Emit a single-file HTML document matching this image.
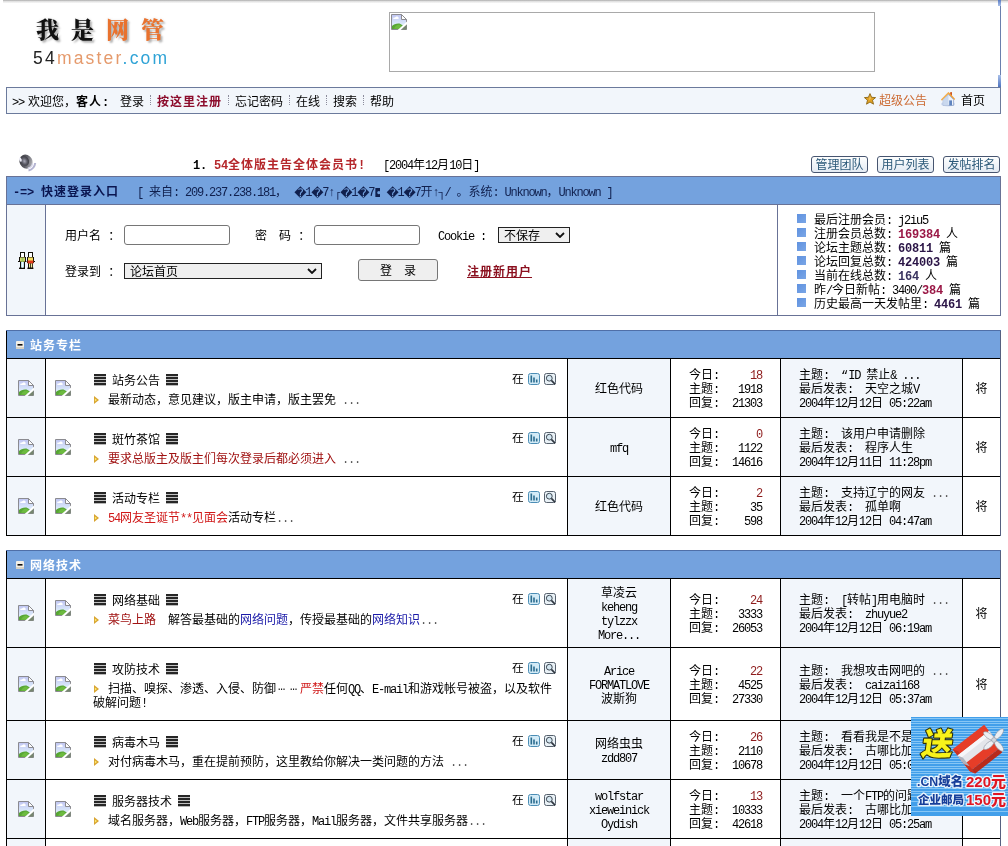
<!DOCTYPE html><html lang="zh-CN"><head><meta charset="utf-8"><title>我是网管 54master.com</title><style>
*{box-sizing:border-box}
html,body{margin:0;padding:0}
#page{position:absolute;left:0;top:0;width:1008px;height:846px;overflow:hidden;will-change:transform}
body{width:1008px;height:846px;overflow:hidden;position:relative;background:#fff;color:#000;font-family:"Liberation Mono","Noto Sans CJK SC",monospace;font-size:12px;line-height:14px}
.l{font-family:"Liberation Mono",monospace;font-size:12px;letter-spacing:-1.2px}
b,.b{font-weight:bold;font-family:"Liberation Mono","Noto Sans CJK SC",monospace;letter-spacing:1px}
b .l,.b .l{letter-spacing:-.2px;font-weight:bold}
.abs{position:absolute}
svg{display:inline-block}
.sep{display:inline-block;width:14px;height:12px;vertical-align:top;position:relative}
.sep:after{content:"";position:absolute;left:7px;top:0;height:11px;border-left:1px dotted #8fa2c2}
table{border-collapse:separate}
.sec{position:absolute;left:6px;width:995px;border-spacing:1px;background:linear-gradient(#4f6fa8,#4f6fa8) top/100% 1px no-repeat,linear-gradient(#566080,#566080) right/1px 100% no-repeat,#000;table-layout:fixed}
.sec td{padding:0;background:#fff;vertical-align:middle}
.sec td.th{height:27px;background:#74a2de;position:relative;color:#fff}
.sec td.th b{position:absolute;left:23px;top:9px}
.sec td.g{background:#f2f6fb}
.sec td.c1{text-align:center}
.sec td.f{vertical-align:top;position:relative}
.sec .bk{vertical-align:middle}
.fi{position:absolute;left:9px}
.ft{position:absolute;left:48px;top:15px;height:12px;white-space:nowrap}
.ft .ham{position:absolute;top:0}
.ft .nm{position:absolute;left:18px;top:1px}
.fr{position:absolute;right:11px;top:14px;height:12px;white-space:nowrap}
.fr .zai{position:absolute;right:33px;top:1px;width:11px;height:11px;overflow:hidden;line-height:12px}
.fr .ic{position:absolute;top:0}
.fd{position:absolute;left:47px;top:35px;right:12px}
.fd .arw{position:relative;top:0px;margin:0 9px 0 1px}
.mod{text-align:center;padding-top:4px!important}
.jg{text-align:center;padding-top:4px!important}
.st{padding-left:18px!important;padding-top:4px!important}
.st div{width:73px;display:flex;justify-content:space-between;white-space:nowrap}
.lp{padding-left:18px!important;padding-top:4px!important;white-space:nowrap}
.red{color:#8e1c1c}
.d{color:#5a5a5a}
.el{display:inline-block;width:12px;text-align:center;letter-spacing:1px;position:relative;top:-3px}
.mq{font-family:"DejaVu Sans",sans-serif;font-size:12px}
.mj{display:inline-block;width:11px;text-align:center;font-family:"DejaVu Sans",sans-serif;font-size:12px;line-height:14px;vertical-align:top}
.mh{display:inline-block;width:6px;text-align:center;overflow:hidden;vertical-align:top;height:14px}
</style></head><body><div id="page">
<svg width="0" height="0" style="position:absolute"><defs><linearGradient id="sky" x1="0" y1="0" x2="0" y2="1"><stop offset="0" stop-color="#c0c5f2"/><stop offset=".6" stop-color="#d9e7fa"/><stop offset="1" stop-color="#eef6fb"/></linearGradient>
<symbol id="bk" viewBox="0 0 16 16"><path d="M.5 .5H10.5L15.5 5.5V15.5H.5Z" fill="url(#sky)" stroke="#8b8b90"/><path d="M10.5 .5V5.5H15.5Z" fill="#fdfdfd" stroke="#8b8b90"/><path d="M2.3 5V3.8L4 3.4L5.2 2.4H6.6L7.6 3.6V5Z" fill="#fff"/><path d="M1 15V12C2.5 10.4 5.5 9.2 8.5 9.6L12 11.5L14 15Z" fill="#57a634"/><path d="M3 14.5C4 12 6 10.6 8.4 10.4L10.5 12L8 15Z" fill="#6dbb40"/><path d="M9.5 15.5L15.5 10V15.5Z" fill="#76866f"/><path d="M6 16.6L16.6 7V9.6L9 16.6Z" fill="#fff"/></symbol></defs></svg>
<div class="abs" style="left:3px;top:0;width:1005px;height:3px;background:linear-gradient(#a6a6a6,#dedede 40%,#f8f8f8)"></div>
<div class="abs" style="left:1000px;top:0;width:1px;height:113px;background:#6a7fae"></div>
<div class="abs" style="left:998px;top:0;width:3px;height:6px;background:linear-gradient(#5a7cc4,#a9c0ea)"></div>
<div class="abs" style="left:998px;top:75px;width:3px;height:12px;background:linear-gradient(#a9c0ea,#4f74c0)"></div>
<div class="abs" id="logo1" style="left:36px;top:16px;font-family:'Liberation Serif','Noto Serif CJK SC',serif;font-weight:900;font-size:23px;line-height:30px;white-space:nowrap;letter-spacing:12px;text-shadow:2px 2px 2px rgba(0,0,0,.28),0 0 3px rgba(0,0,0,.12);color:#111">我是<span style="color:#e9722e">网管</span></div>
<div class="abs" id="logo2" style="left:33px;top:48px;font-family:'Liberation Sans',sans-serif;font-size:17.5px;line-height:20px;letter-spacing:2.2px;white-space:nowrap;color:#222">54<span style="color:#e59a6c">master</span><span style="color:#2fa3d6">.com</span></div>
<div class="abs" style="left:389px;top:12px;width:486px;height:60px;border:1px solid #a9a9a9"><span style="position:absolute;left:1px;top:1px;line-height:0"><svg class="bk" width="16" height="16"><use href="#bk"/></svg></span></div>
<div class="abs" style="left:6px;top:87px;width:995px;height:27px;border:1px solid #6b7a9c;background:#f2f6fb;white-space:nowrap"><span class="abs" style="left:5px;top:8px;"><span class="l">&gt;&gt;</span></span><span class="abs" style="left:21px;top:8px;">欢迎您，</span><span class="abs" style="left:69px;top:8px;"><b>客人<span class="l">:</span></b></span><span class="abs" style="left:113px;top:8px;">登录</span><i class="abs" style="left:143px;top:7px;height:10px;border-left:1px dotted #8c8c9c"></i><span class="abs" style="left:150px;top:8px;"><b style="color:#8c0c2c">按这里注册</b></span><i class="abs" style="left:221px;top:7px;height:10px;border-left:1px dotted #8c8c9c"></i><span class="abs" style="left:228px;top:8px;">忘记密码</span><i class="abs" style="left:282px;top:7px;height:10px;border-left:1px dotted #8c8c9c"></i><span class="abs" style="left:289px;top:8px;">在线</span><i class="abs" style="left:319px;top:7px;height:10px;border-left:1px dotted #8c8c9c"></i><span class="abs" style="left:326px;top:8px;">搜索</span><i class="abs" style="left:356px;top:7px;height:10px;border-left:1px dotted #8c8c9c"></i><span class="abs" style="left:363px;top:8px;">帮助</span><svg width="12" height="12" viewBox="0 0 12 12" style="position:absolute;left:857px;top:5px"><path d="M6 .6L7.6 4.3L11.6 4.6L8.5 7.2L9.5 11.2L6 9L2.5 11.2L3.5 7.2L.4 4.6L4.4 4.3Z" fill="#e2a224" stroke="#8c6616" stroke-width=".9"/><path d="M6 3L6.8 5.2L5 7.5Z" fill="#f6cf70"/></svg><span class="abs" style="left:872px;top:8px;color:#cc6a32;margin-top:-1px">超级公告</span><svg width="16" height="16" viewBox="0 0 16 16" style="position:absolute;left:933px;top:3px"><ellipse cx="8" cy="13" rx="7" ry="2.6" fill="#cfdcf2"/><path d="M1 8.6L8.5 1L10.3 2.8V1.2H12V4.6L15.2 8L14.2 9L8.5 3.4L2 9.6Z" fill="#f2a23c"/><path d="M8.5 1L2 7.8L1 8.6L2 9.6L8.5 3.4Z" fill="#f4b458"/><path d="M10.3 1.2H12V4.6L10.3 2.8Z" fill="#c8542a"/><path d="M3.2 8.6L8.5 3.6L13.6 8.6V14.4H3.2Z" fill="#eef3fa" stroke="#8ea2c6" stroke-width=".8"/><path d="M3.2 8.6L8.5 3.6V14.4H3.2Z" fill="#c9d8ee"/><rect x="9.2" y="9.4" width="2.8" height="5" fill="#5f84bf"/></svg><span class="abs" style="left:954px;top:8px;margin-top:-1px">首页</span></div>
<svg width="19" height="18" viewBox="0 0 19 18" style="position:absolute;left:18px;top:154px"><defs><linearGradient id="spr" x1="0" y1="0" x2="1" y2="1"><stop offset="0" stop-color="#34343a"/><stop offset=".5" stop-color="#5c5c64"/><stop offset="1" stop-color="#d6d6da"/></linearGradient><radialGradient id="spk" cx=".45" cy=".5" r=".55"><stop offset="0" stop-color="#a9a9b8"/><stop offset=".6" stop-color="#5a5a64"/><stop offset="1" stop-color="#3c3c44"/></radialGradient></defs><ellipse cx="8" cy="7.6" rx="6.4" ry="7.2" transform="rotate(-28 8 7.6)" fill="url(#spr)"/><ellipse cx="6.8" cy="7" rx="4" ry="5" transform="rotate(-28 6.8 7)" fill="url(#spk)"/><ellipse cx="2.4" cy="5.6" rx="1.2" ry="2.2" fill="#f1f1fb" transform="rotate(-20 2.4 5.6)"/><path d="M10.5 16.4C14.2 15.6 16.8 12.6 17.2 9" fill="none" stroke="#b4b4d2" stroke-width="2"/><path d="M9.8 14.2C12.2 13.8 14.2 11.8 14.6 9.4" fill="none" stroke="#d7d7ea" stroke-width="1.3"/></svg>
<div class="abs" style="left:193px;top:159px;white-space:nowrap"><b><span class="l">1. </span></b><b style="color:#b5272b"><span class="l">54</span>全体版主告全体会员书<span class="l">!</span></b><span class="l">   [2004</span>年<span class="l">12</span>月<span class="l">10</span>日<span class="l">]</span></div>
<div class="abs btn" style="left:811px;top:156px;width:57px;height:17px;border:1px solid #475570;border-radius:3px;background:linear-gradient(#fdfefe,#e3eaf3);color:#2b5878;text-align:center;line-height:19px;white-space:nowrap">管理团队</div>
<div class="abs btn" style="left:877px;top:156px;width:57px;height:17px;border:1px solid #475570;border-radius:3px;background:linear-gradient(#fdfefe,#e3eaf3);color:#2b5878;text-align:center;line-height:19px;white-space:nowrap">用户列表</div>
<div class="abs btn" style="left:943px;top:156px;width:57px;height:17px;border:1px solid #475570;border-radius:3px;background:linear-gradient(#fdfefe,#e3eaf3);color:#2b5878;text-align:center;line-height:19px;white-space:nowrap">发帖排名</div>
<div class="abs" style="left:6px;top:176px;width:995px;height:140px;border:1px solid #687296;background:#687296"><div class="abs" style="left:0;top:0;width:993px;height:27px;background:#74a2de;white-space:nowrap;color:#0a1550"><div class="abs" style="left:6px;top:9px"><b><span class="l">-=&gt; </span>快速登录入口</b><span style="color:#10204e"><span class="l">   [ </span>来自<span class="l">: 209.237.238.181</span>， <span class="mj">�</span><span class="l">1</span><span class="mj">�</span><span class="l">7</span><span class="mh">↑</span><span class="mh">┌</span><span class="mj">�</span><span class="l">1</span><span class="mj">�</span><span class="l">7</span><span class="mh mq">◘</span><span class="l"> </span><span class="mj">�</span><span class="l">1</span><span class="mj">�</span><span class="l">7</span>开<span class="mh">↑</span><span class="mh">┐</span><span class="l">/ </span>。系统<span class="l">: Unknown</span>，<span class="l">Unknown ]</span></span></div></div><div class="abs" style="left:0;top:28px;width:38px;height:110px;background:#f2f6fb;padding-top:47px"><svg width="17" height="17" viewBox="0 0 17 17" style="display:block;margin:0 auto"><g fill="#141008"><rect x="2" y="0" width="5" height="6"/><rect x="1" y="5" width="7" height="5"/><rect x="0" y="9" width="8" height="1"/><rect x="2" y="10" width="5" height="6"/><rect x="1" y="15.6" width="6" height="1.4"/><rect x="10" y="0" width="5" height="6"/><rect x="9" y="5" width="7" height="6"/><rect x="8.5" y="9" width="8.5" height="1"/><rect x="10" y="11" width="5" height="5"/><rect x="9.4" y="15.6" width="6" height="1.4"/></g><rect x="3" y="1" width="3" height="4" fill="#fff"/><rect x="11" y="1" width="3" height="4" fill="#fff"/><rect x="2" y="5.5" width="5" height="4" fill="#d9d96a"/><rect x="3.5" y="6" width="2" height="4" fill="#9cc85a"/><rect x="3" y="10" width="3" height="5.6" fill="#bfe3ee"/><rect x="4.2" y="10" width=".8" height="5.6" fill="#fff"/><rect x="10" y="5.5" width="5" height="3.5" fill="#f4dc60"/><rect x="9.6" y="8.5" width="5.8" height="3" fill="#e23a1c"/><rect x="11" y="11.5" width="1.2" height="4" fill="#f4e89a"/><rect x="13" y="11.5" width="1.2" height="4" fill="#f4e89a"/></svg></div><div class="abs" style="left:39px;top:28px;width:731px;height:110px;background:#fff"></div><div class="abs" style="left:771px;top:28px;width:222px;height:110px;background:#fff;padding:9px 0 0 36px;white-space:nowrap"><div style="position:relative;height:14px"><i style="position:absolute;left:-17px;top:0px;width:9px;height:9px;background:linear-gradient(135deg,#5f92e0,#7aa6e6)"></i>最后注册会员<span class="l">: </span><span class="l">j2iu5</span></div><div style="position:relative;height:14px"><i style="position:absolute;left:-17px;top:0px;width:9px;height:9px;background:linear-gradient(135deg,#5f92e0,#7aa6e6)"></i>注册会员总数<span class="l">: </span><b style="color:#9a1846"><span class="l">169384</span></b><span class="l"> </span>人</div><div style="position:relative;height:14px"><i style="position:absolute;left:-17px;top:0px;width:9px;height:9px;background:linear-gradient(135deg,#5f92e0,#7aa6e6)"></i>论坛主题总数<span class="l">: </span><b style="color:#2a1446"><span class="l">60811</span></b><span class="l"> </span>篇</div><div style="position:relative;height:14px"><i style="position:absolute;left:-17px;top:0px;width:9px;height:9px;background:linear-gradient(135deg,#5f92e0,#7aa6e6)"></i>论坛回复总数<span class="l">: </span><b style="color:#2a1446"><span class="l">424003</span></b><span class="l"> </span>篇</div><div style="position:relative;height:14px"><i style="position:absolute;left:-17px;top:0px;width:9px;height:9px;background:linear-gradient(135deg,#5f92e0,#7aa6e6)"></i>当前在线总数<span class="l">: </span><b style="color:#3a3460"><span class="l">164</span></b><span class="l"> </span>人</div><div style="position:relative;height:14px"><i style="position:absolute;left:-17px;top:0px;width:9px;height:9px;background:linear-gradient(135deg,#5f92e0,#7aa6e6)"></i>昨<span class="l">/</span>今日新帖<span class="l">: </span><span class="l">3400/</span><b style="color:#9a1846"><span class="l">384</span></b><span class="l"> </span>篇</div><div style="position:relative;height:14px"><i style="position:absolute;left:-17px;top:0px;width:9px;height:9px;background:linear-gradient(135deg,#5f92e0,#7aa6e6)"></i>历史最高一天发帖里<span class="l">: </span><b style="color:#2a1446"><span class="l">4461</span></b><span class="l"> </span>篇</div></div></div>
<div class="abs" style="left:65px;top:230px;white-space:nowrap">用户名 ：</div>
<div class="abs" style="left:124px;top:225px;width:106px;height:20px;border:1px solid #767676;border-radius:3px;background:#fff"></div>
<div class="abs" style="left:255px;top:230px;white-space:nowrap">密<span class="l">  </span>码 ：</div>
<div class="abs" style="left:314px;top:225px;width:106px;height:20px;border:1px solid #767676;border-radius:3px;background:#fff"></div>
<div class="abs" style="left:438px;top:230px;white-space:nowrap"><span class="l">Cookie : </span></div>
<div class="abs" style="left:498px;top:227px;width:72px;height:16px;border:1px solid #222;background:#efefef;padding-left:5px;line-height:18px;white-space:nowrap">不保存<svg width="10" height="6" viewBox="0 0 10 6" style="position:absolute;right:4px;top:4px"><path d="M1 1L5 5L9 1" fill="none" stroke="#111" stroke-width="1.8"/></svg></div>
<div class="abs" style="left:65px;top:266px;white-space:nowrap">登录到 ：</div>
<div class="abs" style="left:124px;top:263px;width:198px;height:16px;border:1px solid #222;background:#efefef;padding-left:5px;line-height:18px;white-space:nowrap">论坛首页<svg width="10" height="6" viewBox="0 0 10 6" style="position:absolute;right:4px;top:4px"><path d="M1 1L5 5L9 1" fill="none" stroke="#111" stroke-width="1.8"/></svg></div>
<div class="abs" style="left:358px;top:259px;width:80px;height:22px;border:1px solid #767676;border-radius:3px;background:#efefef;text-align:center;line-height:24px;white-space:nowrap">登<span class="l">  </span>录</div>
<div class="abs" style="left:467px;top:266px;white-space:nowrap"><b style="color:#8b0f1e;text-decoration:underline">注册新用户</b></div>
<table class="sec" style="top:330px" cellspacing="1"><colgroup><col style="width:38px"><col style="width:521px"><col style="width:102px"><col style="width:109px"><col style="width:181px"><col style="width:37px"></colgroup><tr><td class="th" colspan="6"><svg width="8" height="8" viewBox="0 0 8 8" style="position:absolute;left:9px;top:10px"><rect width="8" height="8" rx="1" fill="#f3efe6"/><rect x="0" y="6" width="8" height="2" fill="#d8d2c4"/><rect x="1.5" y="3" width="5" height="1.6" fill="#111"/></svg><b>站务专栏</b></td></tr><tr style="height:58px"><td class="g c1"><svg class="bk" width="16" height="16"><use href="#bk"/></svg></td><td class="f"><span class="fi" style="top:21px"><svg class="bk" width="16" height="16"><use href="#bk"/></svg></span><div class="ft"><svg class="ham" width="12" height="12" viewBox="0 0 12 12"><g fill="#262626"><rect y="0" width="12" height="2"/><rect y="3" width="12" height="2"/><rect y="6" width="12" height="2"/><rect y="9" width="12" height="2"/></g><g fill="#9a9a9a"><rect y="2" width="12" height=".6"/><rect y="5" width="12" height=".6"/><rect y="8" width="12" height=".6"/><rect y="11" width="12" height=".7"/></g></svg><span class="nm">站务公告</span><span style="position:absolute;left:72px;top:0"><svg class="ham" width="12" height="12" viewBox="0 0 12 12"><g fill="#262626"><rect y="0" width="12" height="2"/><rect y="3" width="12" height="2"/><rect y="6" width="12" height="2"/><rect y="9" width="12" height="2"/></g><g fill="#9a9a9a"><rect y="2" width="12" height=".6"/><rect y="5" width="12" height=".6"/><rect y="8" width="12" height=".6"/><rect y="11" width="12" height=".7"/></g></svg></span></div><div class="fr"><span class="zai">在</span><span style="position:absolute;right:16px;top:0;width:12px;height:12px"><svg class="ic" width="12" height="12" viewBox="0 0 12 12"><rect x=".5" y=".5" width="11" height="11" rx="2" fill="#d3ebf7" stroke="#4b8db5"/><rect x="2.5" y="2.5" width="1.6" height="7" fill="#2c6d8f"/><rect x="5.2" y="4.5" width="1.6" height="5" fill="#2c6d8f"/><rect x="7.9" y="6.5" width="1.6" height="3" fill="#2c6d8f"/></svg></span><span style="position:absolute;right:0;top:0;width:12px;height:12px"><svg class="ic" width="12" height="12" viewBox="0 0 12 12"><rect x=".5" y=".5" width="11" height="11" rx="2" fill="#e9f1f6" stroke="#56606c"/><circle cx="5.3" cy="5.2" r="2.9" fill="#d6e8f2" stroke="#3f4a55" stroke-width="1"/><path d="M7.4 7.4L11.2 11.4" stroke="#2e3640" stroke-width="1.6"/></svg></span></div><div class="fd"><svg class="arw" width="5" height="8" viewBox="0 0 5 8"><path d="M0 0L5 4L0 8Z" fill="#d8a330"/><path d="M.9 2.4L3 4L.9 5.6Z" fill="#fbea72"/></svg>最新动态，意见建议，版主申请，版主罢免<span class="l d"> ...</span></div></td><td class="g mod">红色代码</td><td class="st"><div><span>今日:</span><span class="red"><span class="l">18</span></span></div><div><span>主题:</span><span><span class="l">1918</span></span></div><div><span>回复:</span><span><span class="l">21303</span></span></div></td><td class="g lp">主题<span class="l">:</span><span class="l">&nbsp;&nbsp;</span>“<span class="l">ID </span>禁止<span class="l">&amp; ...</span><br>最后发表<span class="l">:&nbsp;&nbsp;</span>天空之城<span class="l">V</span><br><span class="l">2004</span>年<span class="l">12</span>月<span class="l">12</span>日<span class="l"> 05:22am</span></td><td class="jg">将</td></tr><tr style="height:58px"><td class="g c1"><svg class="bk" width="16" height="16"><use href="#bk"/></svg></td><td class="f"><span class="fi" style="top:21px"><svg class="bk" width="16" height="16"><use href="#bk"/></svg></span><div class="ft"><svg class="ham" width="12" height="12" viewBox="0 0 12 12"><g fill="#262626"><rect y="0" width="12" height="2"/><rect y="3" width="12" height="2"/><rect y="6" width="12" height="2"/><rect y="9" width="12" height="2"/></g><g fill="#9a9a9a"><rect y="2" width="12" height=".6"/><rect y="5" width="12" height=".6"/><rect y="8" width="12" height=".6"/><rect y="11" width="12" height=".7"/></g></svg><span class="nm">斑竹茶馆</span><span style="position:absolute;left:72px;top:0"><svg class="ham" width="12" height="12" viewBox="0 0 12 12"><g fill="#262626"><rect y="0" width="12" height="2"/><rect y="3" width="12" height="2"/><rect y="6" width="12" height="2"/><rect y="9" width="12" height="2"/></g><g fill="#9a9a9a"><rect y="2" width="12" height=".6"/><rect y="5" width="12" height=".6"/><rect y="8" width="12" height=".6"/><rect y="11" width="12" height=".7"/></g></svg></span></div><div class="fr"><span class="zai">在</span><span style="position:absolute;right:16px;top:0;width:12px;height:12px"><svg class="ic" width="12" height="12" viewBox="0 0 12 12"><rect x=".5" y=".5" width="11" height="11" rx="2" fill="#d3ebf7" stroke="#4b8db5"/><rect x="2.5" y="2.5" width="1.6" height="7" fill="#2c6d8f"/><rect x="5.2" y="4.5" width="1.6" height="5" fill="#2c6d8f"/><rect x="7.9" y="6.5" width="1.6" height="3" fill="#2c6d8f"/></svg></span><span style="position:absolute;right:0;top:0;width:12px;height:12px"><svg class="ic" width="12" height="12" viewBox="0 0 12 12"><rect x=".5" y=".5" width="11" height="11" rx="2" fill="#e9f1f6" stroke="#56606c"/><circle cx="5.3" cy="5.2" r="2.9" fill="#d6e8f2" stroke="#3f4a55" stroke-width="1"/><path d="M7.4 7.4L11.2 11.4" stroke="#2e3640" stroke-width="1.6"/></svg></span></div><div class="fd"><svg class="arw" width="5" height="8" viewBox="0 0 5 8"><path d="M0 0L5 4L0 8Z" fill="#d8a330"/><path d="M.9 2.4L3 4L.9 5.6Z" fill="#fbea72"/></svg><span style="color:#a01212">要求总版主及版主们每次登录后都必须进入</span><span class="l d"> ...</span></div></td><td class="g mod"><span class="l">mfq</span></td><td class="st"><div><span>今日:</span><span class="red"><span class="l">0</span></span></div><div><span>主题:</span><span><span class="l">1122</span></span></div><div><span>回复:</span><span><span class="l">14616</span></span></div></td><td class="g lp">主题<span class="l">:</span><span class="l">&nbsp;&nbsp;</span>该用户申请删除<br>最后发表<span class="l">:&nbsp;&nbsp;</span>程序人生<br><span class="l">2004</span>年<span class="l">12</span>月<span class="l">11</span>日<span class="l"> 11:28pm</span></td><td class="jg">将</td></tr><tr style="height:58px"><td class="g c1"><svg class="bk" width="16" height="16"><use href="#bk"/></svg></td><td class="f"><span class="fi" style="top:21px"><svg class="bk" width="16" height="16"><use href="#bk"/></svg></span><div class="ft"><svg class="ham" width="12" height="12" viewBox="0 0 12 12"><g fill="#262626"><rect y="0" width="12" height="2"/><rect y="3" width="12" height="2"/><rect y="6" width="12" height="2"/><rect y="9" width="12" height="2"/></g><g fill="#9a9a9a"><rect y="2" width="12" height=".6"/><rect y="5" width="12" height=".6"/><rect y="8" width="12" height=".6"/><rect y="11" width="12" height=".7"/></g></svg><span class="nm">活动专栏</span><span style="position:absolute;left:72px;top:0"><svg class="ham" width="12" height="12" viewBox="0 0 12 12"><g fill="#262626"><rect y="0" width="12" height="2"/><rect y="3" width="12" height="2"/><rect y="6" width="12" height="2"/><rect y="9" width="12" height="2"/></g><g fill="#9a9a9a"><rect y="2" width="12" height=".6"/><rect y="5" width="12" height=".6"/><rect y="8" width="12" height=".6"/><rect y="11" width="12" height=".7"/></g></svg></span></div><div class="fr"><span class="zai">在</span><span style="position:absolute;right:16px;top:0;width:12px;height:12px"><svg class="ic" width="12" height="12" viewBox="0 0 12 12"><rect x=".5" y=".5" width="11" height="11" rx="2" fill="#d3ebf7" stroke="#4b8db5"/><rect x="2.5" y="2.5" width="1.6" height="7" fill="#2c6d8f"/><rect x="5.2" y="4.5" width="1.6" height="5" fill="#2c6d8f"/><rect x="7.9" y="6.5" width="1.6" height="3" fill="#2c6d8f"/></svg></span><span style="position:absolute;right:0;top:0;width:12px;height:12px"><svg class="ic" width="12" height="12" viewBox="0 0 12 12"><rect x=".5" y=".5" width="11" height="11" rx="2" fill="#e9f1f6" stroke="#56606c"/><circle cx="5.3" cy="5.2" r="2.9" fill="#d6e8f2" stroke="#3f4a55" stroke-width="1"/><path d="M7.4 7.4L11.2 11.4" stroke="#2e3640" stroke-width="1.6"/></svg></span></div><div class="fd"><svg class="arw" width="5" height="8" viewBox="0 0 5 8"><path d="M0 0L5 4L0 8Z" fill="#d8a330"/><path d="M.9 2.4L3 4L.9 5.6Z" fill="#fbea72"/></svg><span style="color:#d01818"><span class="l">54</span>网友圣诞节<span class="l">**</span>见面会</span>活动专栏<span class="l d">...</span></div></td><td class="g mod">红色代码</td><td class="st"><div><span>今日:</span><span class="red"><span class="l">2</span></span></div><div><span>主题:</span><span><span class="l">35</span></span></div><div><span>回复:</span><span><span class="l">598</span></span></div></td><td class="g lp">主题<span class="l">:</span><span class="l">&nbsp;&nbsp;</span>支持辽宁的网友<span class="l d"> ...</span><br>最后发表<span class="l">:&nbsp;&nbsp;</span>孤单啊<br><span class="l">2004</span>年<span class="l">12</span>月<span class="l">12</span>日<span class="l"> 04:47am</span></td><td class="jg">将</td></tr></table>
<table class="sec" style="top:550px" cellspacing="1"><colgroup><col style="width:38px"><col style="width:521px"><col style="width:102px"><col style="width:109px"><col style="width:181px"><col style="width:37px"></colgroup><tr><td class="th" colspan="6"><svg width="8" height="8" viewBox="0 0 8 8" style="position:absolute;left:9px;top:10px"><rect width="8" height="8" rx="1" fill="#f3efe6"/><rect x="0" y="6" width="8" height="2" fill="#d8d2c4"/><rect x="1.5" y="3" width="5" height="1.6" fill="#111"/></svg><b>网络技术</b></td></tr><tr style="height:68px"><td class="g c1"><svg class="bk" width="16" height="16"><use href="#bk"/></svg></td><td class="f"><span class="fi" style="top:21px"><svg class="bk" width="16" height="16"><use href="#bk"/></svg></span><div class="ft"><svg class="ham" width="12" height="12" viewBox="0 0 12 12"><g fill="#262626"><rect y="0" width="12" height="2"/><rect y="3" width="12" height="2"/><rect y="6" width="12" height="2"/><rect y="9" width="12" height="2"/></g><g fill="#9a9a9a"><rect y="2" width="12" height=".6"/><rect y="5" width="12" height=".6"/><rect y="8" width="12" height=".6"/><rect y="11" width="12" height=".7"/></g></svg><span class="nm">网络基础</span><span style="position:absolute;left:72px;top:0"><svg class="ham" width="12" height="12" viewBox="0 0 12 12"><g fill="#262626"><rect y="0" width="12" height="2"/><rect y="3" width="12" height="2"/><rect y="6" width="12" height="2"/><rect y="9" width="12" height="2"/></g><g fill="#9a9a9a"><rect y="2" width="12" height=".6"/><rect y="5" width="12" height=".6"/><rect y="8" width="12" height=".6"/><rect y="11" width="12" height=".7"/></g></svg></span></div><div class="fr"><span class="zai">在</span><span style="position:absolute;right:16px;top:0;width:12px;height:12px"><svg class="ic" width="12" height="12" viewBox="0 0 12 12"><rect x=".5" y=".5" width="11" height="11" rx="2" fill="#d3ebf7" stroke="#4b8db5"/><rect x="2.5" y="2.5" width="1.6" height="7" fill="#2c6d8f"/><rect x="5.2" y="4.5" width="1.6" height="5" fill="#2c6d8f"/><rect x="7.9" y="6.5" width="1.6" height="3" fill="#2c6d8f"/></svg></span><span style="position:absolute;right:0;top:0;width:12px;height:12px"><svg class="ic" width="12" height="12" viewBox="0 0 12 12"><rect x=".5" y=".5" width="11" height="11" rx="2" fill="#e9f1f6" stroke="#56606c"/><circle cx="5.3" cy="5.2" r="2.9" fill="#d6e8f2" stroke="#3f4a55" stroke-width="1"/><path d="M7.4 7.4L11.2 11.4" stroke="#2e3640" stroke-width="1.6"/></svg></span></div><div class="fd"><svg class="arw" width="5" height="8" viewBox="0 0 5 8"><path d="M0 0L5 4L0 8Z" fill="#d8a330"/><path d="M.9 2.4L3 4L.9 5.6Z" fill="#fbea72"/></svg><span style="color:#a01212">菜鸟上路</span><span class="l">  </span>解答最基础的<span style="color:#1a1aa8">网络问题</span>，传授最基础的<span style="color:#1a1aa8">网络知识</span><span class="l d">...</span></div></td><td class="g mod">草凌云<br><span class="l">keheng</span><br><span class="l">tylzzx</span><br><span class="l">More...</span></td><td class="st"><div><span>今日:</span><span class="red"><span class="l">24</span></span></div><div><span>主题:</span><span><span class="l">3333</span></span></div><div><span>回复:</span><span><span class="l">26053</span></span></div></td><td class="g lp">主题<span class="l">:</span><span class="l">&nbsp;&nbsp;</span><span class="l">[</span>转帖<span class="l">]</span>用电脑时<span class="l d"> ...</span><br>最后发表<span class="l">:&nbsp;&nbsp;</span><span class="l">zhuyue2</span><br><span class="l">2004</span>年<span class="l">12</span>月<span class="l">12</span>日<span class="l"> 06:19am</span></td><td class="jg">将</td></tr><tr style="height:72px"><td class="g c1"><svg class="bk" width="16" height="16"><use href="#bk"/></svg></td><td class="f"><span class="fi" style="top:28px"><svg class="bk" width="16" height="16"><use href="#bk"/></svg></span><div class="ft"><svg class="ham" width="12" height="12" viewBox="0 0 12 12"><g fill="#262626"><rect y="0" width="12" height="2"/><rect y="3" width="12" height="2"/><rect y="6" width="12" height="2"/><rect y="9" width="12" height="2"/></g><g fill="#9a9a9a"><rect y="2" width="12" height=".6"/><rect y="5" width="12" height=".6"/><rect y="8" width="12" height=".6"/><rect y="11" width="12" height=".7"/></g></svg><span class="nm">攻防技术</span><span style="position:absolute;left:72px;top:0"><svg class="ham" width="12" height="12" viewBox="0 0 12 12"><g fill="#262626"><rect y="0" width="12" height="2"/><rect y="3" width="12" height="2"/><rect y="6" width="12" height="2"/><rect y="9" width="12" height="2"/></g><g fill="#9a9a9a"><rect y="2" width="12" height=".6"/><rect y="5" width="12" height=".6"/><rect y="8" width="12" height=".6"/><rect y="11" width="12" height=".7"/></g></svg></span></div><div class="fr"><span class="zai">在</span><span style="position:absolute;right:16px;top:0;width:12px;height:12px"><svg class="ic" width="12" height="12" viewBox="0 0 12 12"><rect x=".5" y=".5" width="11" height="11" rx="2" fill="#d3ebf7" stroke="#4b8db5"/><rect x="2.5" y="2.5" width="1.6" height="7" fill="#2c6d8f"/><rect x="5.2" y="4.5" width="1.6" height="5" fill="#2c6d8f"/><rect x="7.9" y="6.5" width="1.6" height="3" fill="#2c6d8f"/></svg></span><span style="position:absolute;right:0;top:0;width:12px;height:12px"><svg class="ic" width="12" height="12" viewBox="0 0 12 12"><rect x=".5" y=".5" width="11" height="11" rx="2" fill="#e9f1f6" stroke="#56606c"/><circle cx="5.3" cy="5.2" r="2.9" fill="#d6e8f2" stroke="#3f4a55" stroke-width="1"/><path d="M7.4 7.4L11.2 11.4" stroke="#2e3640" stroke-width="1.6"/></svg></span></div><div class="fd"><svg class="arw" width="5" height="8" viewBox="0 0 5 8"><path d="M0 0L5 4L0 8Z" fill="#d8a330"/><path d="M.9 2.4L3 4L.9 5.6Z" fill="#fbea72"/></svg>扫描、嗅探、渗透、入侵、防御<span class="el">…</span><span class="el">…</span><span style="color:#d01818">严禁</span>任何<span class="l">QQ</span>、<span class="l">E-mail</span>和游戏帐号被盗，以及软件破解问题<span class="l">!</span></div></td><td class="g mod"><span class="l">Arice</span><br><span class="l">FORMATLOVE</span><br>波斯狗</td><td class="st"><div><span>今日:</span><span class="red"><span class="l">22</span></span></div><div><span>主题:</span><span><span class="l">4525</span></span></div><div><span>回复:</span><span><span class="l">27330</span></span></div></td><td class="g lp">主题<span class="l">:</span><span class="l">&nbsp;&nbsp;</span>我想攻击网吧的<span class="l d"> ...</span><br>最后发表<span class="l">:&nbsp;&nbsp;</span><span class="l">caizai168</span><br><span class="l">2004</span>年<span class="l">12</span>月<span class="l">12</span>日<span class="l"> 05:37am</span></td><td class="jg">将</td></tr><tr style="height:58px"><td class="g c1"><svg class="bk" width="16" height="16"><use href="#bk"/></svg></td><td class="f"><span class="fi" style="top:21px"><svg class="bk" width="16" height="16"><use href="#bk"/></svg></span><div class="ft"><svg class="ham" width="12" height="12" viewBox="0 0 12 12"><g fill="#262626"><rect y="0" width="12" height="2"/><rect y="3" width="12" height="2"/><rect y="6" width="12" height="2"/><rect y="9" width="12" height="2"/></g><g fill="#9a9a9a"><rect y="2" width="12" height=".6"/><rect y="5" width="12" height=".6"/><rect y="8" width="12" height=".6"/><rect y="11" width="12" height=".7"/></g></svg><span class="nm">病毒木马</span><span style="position:absolute;left:72px;top:0"><svg class="ham" width="12" height="12" viewBox="0 0 12 12"><g fill="#262626"><rect y="0" width="12" height="2"/><rect y="3" width="12" height="2"/><rect y="6" width="12" height="2"/><rect y="9" width="12" height="2"/></g><g fill="#9a9a9a"><rect y="2" width="12" height=".6"/><rect y="5" width="12" height=".6"/><rect y="8" width="12" height=".6"/><rect y="11" width="12" height=".7"/></g></svg></span></div><div class="fr"><span class="zai">在</span><span style="position:absolute;right:16px;top:0;width:12px;height:12px"><svg class="ic" width="12" height="12" viewBox="0 0 12 12"><rect x=".5" y=".5" width="11" height="11" rx="2" fill="#d3ebf7" stroke="#4b8db5"/><rect x="2.5" y="2.5" width="1.6" height="7" fill="#2c6d8f"/><rect x="5.2" y="4.5" width="1.6" height="5" fill="#2c6d8f"/><rect x="7.9" y="6.5" width="1.6" height="3" fill="#2c6d8f"/></svg></span><span style="position:absolute;right:0;top:0;width:12px;height:12px"><svg class="ic" width="12" height="12" viewBox="0 0 12 12"><rect x=".5" y=".5" width="11" height="11" rx="2" fill="#e9f1f6" stroke="#56606c"/><circle cx="5.3" cy="5.2" r="2.9" fill="#d6e8f2" stroke="#3f4a55" stroke-width="1"/><path d="M7.4 7.4L11.2 11.4" stroke="#2e3640" stroke-width="1.6"/></svg></span></div><div class="fd"><svg class="arw" width="5" height="8" viewBox="0 0 5 8"><path d="M0 0L5 4L0 8Z" fill="#d8a330"/><path d="M.9 2.4L3 4L.9 5.6Z" fill="#fbea72"/></svg>对付病毒木马，重在提前预防，这里教给你解决一类问题的方法<span class="l d"> ...</span></div></td><td class="g mod">网络虫虫<br><span class="l">zdd807</span></td><td class="st"><div><span>今日:</span><span class="red"><span class="l">26</span></span></div><div><span>主题:</span><span><span class="l">2110</span></span></div><div><span>回复:</span><span><span class="l">10678</span></span></div></td><td class="g lp">主题<span class="l">:</span><span class="l">&nbsp;&nbsp;</span>看看我是不是中<span class="l d"> ...</span><br>最后发表<span class="l">:&nbsp;&nbsp;</span>古哪比加<br><span class="l">2004</span>年<span class="l">12</span>月<span class="l">12</span>日<span class="l"> 05:04am</span></td><td class="jg">将</td></tr><tr style="height:58px"><td class="g c1"><svg class="bk" width="16" height="16"><use href="#bk"/></svg></td><td class="f"><span class="fi" style="top:21px"><svg class="bk" width="16" height="16"><use href="#bk"/></svg></span><div class="ft"><svg class="ham" width="12" height="12" viewBox="0 0 12 12"><g fill="#262626"><rect y="0" width="12" height="2"/><rect y="3" width="12" height="2"/><rect y="6" width="12" height="2"/><rect y="9" width="12" height="2"/></g><g fill="#9a9a9a"><rect y="2" width="12" height=".6"/><rect y="5" width="12" height=".6"/><rect y="8" width="12" height=".6"/><rect y="11" width="12" height=".7"/></g></svg><span class="nm">服务器技术</span><span style="position:absolute;left:84px;top:0"><svg class="ham" width="12" height="12" viewBox="0 0 12 12"><g fill="#262626"><rect y="0" width="12" height="2"/><rect y="3" width="12" height="2"/><rect y="6" width="12" height="2"/><rect y="9" width="12" height="2"/></g><g fill="#9a9a9a"><rect y="2" width="12" height=".6"/><rect y="5" width="12" height=".6"/><rect y="8" width="12" height=".6"/><rect y="11" width="12" height=".7"/></g></svg></span></div><div class="fr"><span class="zai">在</span><span style="position:absolute;right:16px;top:0;width:12px;height:12px"><svg class="ic" width="12" height="12" viewBox="0 0 12 12"><rect x=".5" y=".5" width="11" height="11" rx="2" fill="#d3ebf7" stroke="#4b8db5"/><rect x="2.5" y="2.5" width="1.6" height="7" fill="#2c6d8f"/><rect x="5.2" y="4.5" width="1.6" height="5" fill="#2c6d8f"/><rect x="7.9" y="6.5" width="1.6" height="3" fill="#2c6d8f"/></svg></span><span style="position:absolute;right:0;top:0;width:12px;height:12px"><svg class="ic" width="12" height="12" viewBox="0 0 12 12"><rect x=".5" y=".5" width="11" height="11" rx="2" fill="#e9f1f6" stroke="#56606c"/><circle cx="5.3" cy="5.2" r="2.9" fill="#d6e8f2" stroke="#3f4a55" stroke-width="1"/><path d="M7.4 7.4L11.2 11.4" stroke="#2e3640" stroke-width="1.6"/></svg></span></div><div class="fd"><svg class="arw" width="5" height="8" viewBox="0 0 5 8"><path d="M0 0L5 4L0 8Z" fill="#d8a330"/><path d="M.9 2.4L3 4L.9 5.6Z" fill="#fbea72"/></svg>域名服务器，<span class="l">Web</span>服务器，<span class="l">FTP</span>服务器，<span class="l">Mail</span>服务器，文件共享服务器<span class="l d">...</span></div></td><td class="g mod"><span class="l">wolfstar</span><br><span class="l">xieweinick</span><br><span class="l">Oydish</span></td><td class="st"><div><span>今日:</span><span class="red"><span class="l">13</span></span></div><div><span>主题:</span><span><span class="l">10333</span></span></div><div><span>回复:</span><span><span class="l">42618</span></span></div></td><td class="g lp">主题<span class="l">:</span><span class="l">&nbsp;&nbsp;</span>一个<span class="l">FTP</span>的问题<span class="l d"> ...</span><br>最后发表<span class="l">:&nbsp;&nbsp;</span>古哪比加<br><span class="l">2004</span>年<span class="l">12</span>月<span class="l">12</span>日<span class="l"> 05:25am</span></td><td class="jg">将</td></tr><tr style="height:58px"><td class="g c1"><svg class="bk" width="16" height="16"><use href="#bk"/></svg></td><td class="f"><span class="fi" style="top:21px"><svg class="bk" width="16" height="16"><use href="#bk"/></svg></span><div class="ft"><svg class="ham" width="12" height="12" viewBox="0 0 12 12"><g fill="#262626"><rect y="0" width="12" height="2"/><rect y="3" width="12" height="2"/><rect y="6" width="12" height="2"/><rect y="9" width="12" height="2"/></g><g fill="#9a9a9a"><rect y="2" width="12" height=".6"/><rect y="5" width="12" height=".6"/><rect y="8" width="12" height=".6"/><rect y="11" width="12" height=".7"/></g></svg><span class="nm">操作系统</span><span style="position:absolute;left:72px;top:0"><svg class="ham" width="12" height="12" viewBox="0 0 12 12"><g fill="#262626"><rect y="0" width="12" height="2"/><rect y="3" width="12" height="2"/><rect y="6" width="12" height="2"/><rect y="9" width="12" height="2"/></g><g fill="#9a9a9a"><rect y="2" width="12" height=".6"/><rect y="5" width="12" height=".6"/><rect y="8" width="12" height=".6"/><rect y="11" width="12" height=".7"/></g></svg></span></div><div class="fr"><span class="zai">在</span><span style="position:absolute;right:16px;top:0;width:12px;height:12px"><svg class="ic" width="12" height="12" viewBox="0 0 12 12"><rect x=".5" y=".5" width="11" height="11" rx="2" fill="#d3ebf7" stroke="#4b8db5"/><rect x="2.5" y="2.5" width="1.6" height="7" fill="#2c6d8f"/><rect x="5.2" y="4.5" width="1.6" height="5" fill="#2c6d8f"/><rect x="7.9" y="6.5" width="1.6" height="3" fill="#2c6d8f"/></svg></span><span style="position:absolute;right:0;top:0;width:12px;height:12px"><svg class="ic" width="12" height="12" viewBox="0 0 12 12"><rect x=".5" y=".5" width="11" height="11" rx="2" fill="#e9f1f6" stroke="#56606c"/><circle cx="5.3" cy="5.2" r="2.9" fill="#d6e8f2" stroke="#3f4a55" stroke-width="1"/><path d="M7.4 7.4L11.2 11.4" stroke="#2e3640" stroke-width="1.6"/></svg></span></div><div class="fd"><svg class="arw" width="5" height="8" viewBox="0 0 5 8"><path d="M0 0L5 4L0 8Z" fill="#d8a330"/><path d="M.9 2.4L3 4L.9 5.6Z" fill="#fbea72"/></svg>各种操作系统的安装、配置与维护<span class="l d"> ...</span></div></td><td class="g mod"><span class="l">admin</span></td><td class="st"><div><span>今日:</span><span class="red"><span class="l">9</span></span></div><div><span>主题:</span><span><span class="l">2048</span></span></div><div><span>回复:</span><span><span class="l">9876</span></span></div></td><td class="g lp">主题<span class="l">:</span><span class="l">&nbsp;&nbsp;</span>系统问题<span class="l d"> ...</span><br>最后发表<span class="l">:&nbsp;&nbsp;</span><span class="l">admin</span><br><span class="l">2004</span>年<span class="l">12</span>月<span class="l">12</span>日<span class="l"> 05:11am</span></td><td class="jg">将</td></tr></table>
<div class="abs" id="ad" style="left:911px;top:717px;width:97px;height:99px;overflow:hidden;background:repeating-linear-gradient(#429fea 0,#429fea 1.5px,#86c6f5 1.5px,#86c6f5 2.5px)"><svg width="97" height="99" viewBox="0 0 97 99" style="position:absolute;left:0;top:0"><g transform="translate(66,31) rotate(-38)"><path d="M-20 -14H20V14H-20Z" fill="#e63d28"/><path d="M-20 14H20L17 19H-17Z" fill="#b82a1c"/><path d="M-20 -14L-20 14L-17 19L-17 -9Z" fill="#c93322"/><rect x="-20" y="-6" width="40" height="11" fill="#e4e5ea"/><rect x="-20" y="-6" width="40" height="4" fill="#f6f6f9"/><path d="M-20 -6L-20 5L-17 10L-17 -1Z" fill="#aeb2bd"/></g><g transform="translate(83,23)" fill="#eceef3" stroke="#8e949f" stroke-width=".6"><ellipse cx="-5" cy="-4" rx="6.5" ry="2.6" transform="rotate(35 -5 -4)"/><ellipse cx="5" cy="-6" rx="6.5" ry="2.6" transform="rotate(-50 5 -6)"/><ellipse cx="-5" cy="5" rx="6.5" ry="2.6" transform="rotate(-40 -5 5)"/><ellipse cx="5" cy="6" rx="6.5" ry="2.6" transform="rotate(50 5 6)"/><circle r="2.4" fill="#d4d7de"/></g><text x="15" y="38" font-family="'Liberation Sans','Noto Sans CJK SC',sans-serif" font-weight="900" font-size="31" fill="#f8f21a" stroke="#2e2e0c" stroke-width="2.2" stroke-linejoin="round" paint-order="stroke" transform="skewX(-8)">送</text><g font-family="'Liberation Sans','Noto Sans CJK SC',sans-serif" font-weight="900" paint-order="stroke" stroke="#fff" stroke-opacity=".85" stroke-width="2.6" stroke-linejoin="round"><text x="6" y="69" font-size="12.5" fill="#173f9a" textLength="46" lengthAdjust="spacingAndGlyphs">.CN域名</text><text x="55" y="70" font-size="14.5" fill="#e01622" textLength="40" lengthAdjust="spacingAndGlyphs">220元</text><text x="7" y="86.5" font-size="11.5" fill="#173f9a" textLength="46" lengthAdjust="spacingAndGlyphs">企业邮局</text><text x="55" y="87.5" font-size="14.5" fill="#e01622" textLength="40" lengthAdjust="spacingAndGlyphs">150元</text></g></svg></div>
</div></body></html>
